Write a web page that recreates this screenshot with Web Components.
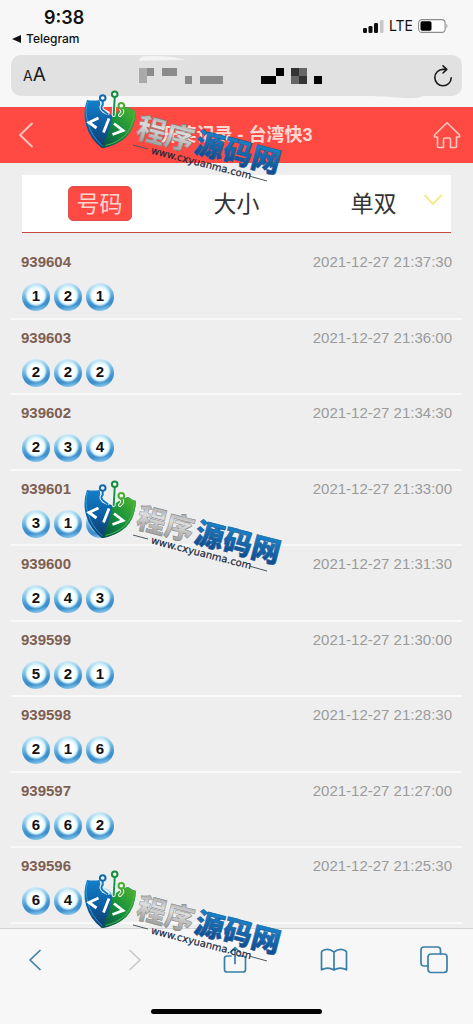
<!DOCTYPE html>
<html lang="zh-CN">
<head>
<meta charset="utf-8">
<meta name="viewport" content="width=device-width, initial-scale=1">
<title>开奖记录 - 台湾快3</title>
<style>
    body {
        margin: 0;
        font-family: "Liberation Sans", "Noto Sans CJK SC", sans-serif;
        background: #f7f7f7;
    }
</style>
</head>
<body>
<lottery-app>
    <status-bar slot="top" time="9:38" back="Telegram" network="LTE"></status-bar>
    <address-bar slot="top"></address-bar>
    <page-header slot="top">开奖记录 - 台湾快3</page-header>
    <view-tabs slot="top">
        <view-tab active>号码</view-tab>
        <view-tab>大小</view-tab>
        <view-tab>单双</view-tab>
    </view-tabs>
    <draw-row issue="939604" time="2021-12-27 21:37:30" balls="1,2,1"></draw-row>
    <draw-row issue="939603" time="2021-12-27 21:36:00" balls="2,2,2"></draw-row>
    <draw-row issue="939602" time="2021-12-27 21:34:30" balls="2,3,4"></draw-row>
    <draw-row issue="939601" time="2021-12-27 21:33:00" balls="3,1,2"></draw-row>
    <draw-row issue="939600" time="2021-12-27 21:31:30" balls="2,4,3"></draw-row>
    <draw-row issue="939599" time="2021-12-27 21:30:00" balls="5,2,1"></draw-row>
    <draw-row issue="939598" time="2021-12-27 21:28:30" balls="2,1,6"></draw-row>
    <draw-row issue="939597" time="2021-12-27 21:27:00" balls="6,6,2"></draw-row>
    <draw-row issue="939596" time="2021-12-27 21:25:30" balls="6,4,1"></draw-row>
    <browser-toolbar slot="bottom"></browser-toolbar>
    <site-watermark slot="overlay" style="--top: 88px"></site-watermark>
    <site-watermark slot="overlay" style="--top: 478px"></site-watermark>
    <site-watermark slot="overlay" style="--top: 868px"></site-watermark>
</lottery-app>

<script>
// Page shell: bars on top, the draw list in the middle, the browser toolbar below
class LotteryApp extends HTMLElement {
    constructor() {
        super();
        this._root = this.attachShadow({ mode: 'open' });
    }
    connectedCallback() {
        this._root.innerHTML = `
        <style>
            :host {
                display: flex;
                flex-direction: column;
                position: relative;
                min-height: 100vh;
                overflow: hidden;
                background: #eeeeee;
            }
            main {
                flex: 1;
                display: grid;
                grid-auto-rows: 1fr;
                padding: 11px 11px 4px;
            }
        </style>
        <slot name="top"></slot>
        <main><slot></slot></main>
        <slot name="bottom"></slot>
        <slot name="overlay"></slot>
    `;
    }
}
window.customElements.define('lottery-app', LotteryApp)

class StatusBar extends HTMLElement {
    constructor() {
        super();
        this._root = this.attachShadow({ mode: 'open' });
    }
    connectedCallback() {
        this._root.innerHTML = `
        <style>
            :host {
                display: flex;
                justify-content: space-between;
                align-items: flex-start;
                box-sizing: border-box;
                height: 55px;
                padding: 6px 25px 0 12px;
                background: #f7f7f7;
                color: #111;
                font-family: Inter, sans-serif;
            }
            .left, .right { display: flex; }
            .left { flex-direction: column; }
            .right { align-items: center; gap: 5px; padding-top: 9px; font-size: 14px; line-height: 22px; }
            time { padding-left: 32px; font-size: 18px; line-height: 24px; font-weight: 600; }
            a { display: flex; align-items: center; gap: 5px; font-size: 12px; line-height: 18px; font-weight: 500; color: inherit; text-decoration: none; }
            svg { display: block; }
        </style>
        <div class="left">
            <time>${this.getAttribute('time')}</time>
            <a href="#"><svg width="9" height="8" viewBox="0 0 9 8"><path d="M0 4 9 0V8Z" fill="#111"/></svg>${this.getAttribute('back')}</a>
        </div>
        <div class="right">
            <svg width="21" height="13" viewBox="0 0 21 13">
                <rect x="0" y="8" width="4" height="5" rx="1.2" fill="#111"/>
                <rect x="5.5" y="6" width="4" height="7" rx="1.2" fill="#111"/>
                <rect x="11" y="3" width="4" height="10" rx="1.2" fill="#111"/>
                <rect x="17" y="0" width="3.5" height="13" rx="1.2" fill="#c9c9c9"/>
            </svg>
            <span>${this.getAttribute('network')}</span>
            <svg width="30" height="14" viewBox="0 0 30 14">
                <rect x=".6" y=".6" width="26.500" height="12.8" rx="3.5" fill="#fff" stroke="#8c8c8c" stroke-width="1.1"/>
                <rect x="2.5" y="2.3" width="11" height="9.4" rx="1.6" fill="#000"/>
                <path d="M28.500 4.6q1.8 2.4 0 4.8Z" fill="#8c8c8c"/>
            </svg>
        </div>
    `;
    }
}
window.customElements.define('status-bar', StatusBar)

class AddressBar extends HTMLElement {
    constructor() {
        super();
        this._root = this.attachShadow({ mode: 'open' });
    }
    connectedCallback() {
        this._root.innerHTML = `
        <style>
            :host { display: block; padding: 0 11px 11px; background: #f7f7f7; }
            .bar {
                display: grid;
                grid-template-columns: 1fr 184px 1fr;
                align-items: center;
                height: 41px;
                padding: 0 8px 0 12px;
                border-radius: 10px;
                background: #e1e1e1;
            }
            button { display: flex; align-items: baseline; padding: 0; border: 0; background: none; color: #1b1b1b; font: 19px/24px Inter, sans-serif; }
            button:last-child { justify-self: end; }
            small { font-size: 14px; }
            .address { display: block; overflow: visible; }
        </style>
        <div class="bar">
            <button aria-label="Text size"><small>A</small>A</button>
            <!-- masked host name -->
            <svg class="address" width="184" height="41" viewBox="0 0 184 41" shape-rendering="crispEdges">
                <path d="M-8 5q1-4 9-4 26 0 38 4-20 0-47 1Z" fill="#f3f3f3" shape-rendering="auto"/>
                <path d="M222 41h54q-6 3-20 2-20-2-34-2Z" fill="#e1e1e1" shape-rendering="auto"/>
                <path d="M-8 13H0v15H-8Z" fill="#a9a9a9"/>
                <path d="M0 13h7v8H0ZM15 13h15v8H15ZM38 21h7v8h-7ZM53 21h23v8H53Z" fill="#8b8b8b"/>
                <path d="M114 21h15v8h-15ZM129 13h8v8h-8ZM167 21h8v8h-8Z" fill="#000"/>
                <path d="M144 13h8v8h-8ZM152 21h8v8h-8Z" fill="#333"/>
                <path d="M152 13h8v8h-8ZM144 21h8v8h-8Z" fill="#666"/>
            </svg>
            <button aria-label="Reload">
                <svg width="22" height="24" viewBox="0 0 22 24" fill="none" stroke="#1b1b1b" stroke-width="1.6" stroke-linecap="round" stroke-linejoin="round">
                    <path d="M14.5 5.4H11a8.2 8.2 0 1 0 8.2 8.3M11 1.8l3.8 3.6L11 9"/>
                </svg>
            </button>
        </div>
    `;
    }
}
window.customElements.define('address-bar', AddressBar)

class PageHeader extends HTMLElement {
    constructor() {
        super();
        this._root = this.attachShadow({ mode: 'open' });
    }
    connectedCallback() {
        this._root.innerHTML = `
        <style>
            :host {
                display: grid;
                grid-template-columns: 44px 1fr 44px;
                align-items: center;
                height: 56px;
                padding: 0 4px;
                background: #ff4a43;
                color: #fbd9d3;
            }
            h1 { margin: 0; font-size: 18px; line-height: 28px; font-weight: bold; text-align: center; }
            a { display: flex; justify-content: center; }
        </style>
        <a href="#" aria-label="Back">
            <svg width="16" height="26" viewBox="0 0 16 26" fill="none" stroke="#fbc9c0" stroke-width="1.8"><path d="M14.5 1 2 13l12.5 12"/></svg>
        </a>
        <h1><slot></slot></h1>
        <a href="#" aria-label="Home">
            <svg width="28" height="28" viewBox="0 0 28 28" fill="none" stroke="#fbc9c0" stroke-width="1.6" stroke-linejoin="round"><path d="M1.5 14 14 1.8 26.5 14v2h-3v9.5q0 1-1 1h-5v-8q0-1.5-1.500-1.500h-4q-1.500 0-1.500 1.500v8h-5q-1 0-1-1V16h-3Z"/></svg>
        </a>
    `;
    }
}
window.customElements.define('page-header', PageHeader)

class ViewTabs extends HTMLElement {
    constructor() {
        super();
        this._root = this.attachShadow({ mode: 'open' });
    }
    connectedCallback() {
        this._root.innerHTML = `
        <style>
            :host {
                display: block;
                position: relative;
                margin: 12px 22px 0;
                border-bottom: 1px solid #c4483f;
                background: #fff;
            }
            nav { display: grid; grid-template-columns: repeat(3, 1fr); align-items: center; height: 57px; padding: 0 9px; }
            /* the chevron lies over the last tab's cell */
            .more { position: absolute; right: 8px; top: 18px; padding: 0; border: 0; background: none; }
            svg { display: block; }
        </style>
        <nav><slot></slot></nav>
        <button class="more" aria-label="More">
            <svg width="20" height="14" viewBox="0 0 20 14" fill="none" stroke="#f6ea93" stroke-width="2"><path d="m1.500 2 8.500 9 8.500-9"/></svg>
        </button>
    `;
    }
}
window.customElements.define('view-tabs', ViewTabs)

class ViewTab extends HTMLElement {
    constructor() {
        super();
        this._root = this.attachShadow({ mode: 'open' });
    }
    connectedCallback() {
        this._root.innerHTML = `
        <style>
            :host { display: flex; justify-content: center; }
            button {
                padding: 0 8px 2px;
                border: 1px solid transparent;
                border-radius: 5px;
                background: none;
                color: #333;
                font: 23px/31px "Noto Sans CJK SC", sans-serif;
            }
            :host([active]) button { border-color: #d9544e; background: #ff4a43; color: #fbd5d0; }
        </style>
        <button><slot></slot></button>
    `;
    }
}
window.customElements.define('view-tab', ViewTab)

// One draw: issue number, time and its three balls
class DrawRow extends HTMLElement {
    constructor() {
        super();
        this._root = this.attachShadow({ mode: 'open' });
    }
    connectedCallback() {
        const balls = this.getAttribute('balls').split(',').map(n => `<span>${n}</span>`).join('');
        this._root.innerHTML = `
        <style>
            :host { display: block; padding: 8px 10px 0; border-bottom: 2px solid #f9f9f9; }
            .info { display: flex; justify-content: space-between; font-size: 15px; line-height: 19px; }
            b { color: #7d6052; }
            time { color: #9b9b9b; }
            .balls { display: flex; gap: 4px; padding: 12px 1px 0; }
            .balls span {
                width: 28px;
                height: 28px;
                border-radius: 50%;
                background:
                    radial-gradient(circle at 50% 45%, #fff 0 30%, #dff8fc 42%, transparent 54%),
                    linear-gradient(170deg, #d3ebf6 6%, #8fcbea 30%, #3f93cf 62%, #3c8dcb 76%, #8ccdee 94%);
                color: #111;
                font-size: 15px;
                font-weight: bold;
                line-height: 26px;
                text-align: center;
            }
        </style>
        <div class="info"><b>${this.getAttribute('issue')}</b><time>${this.getAttribute('time')}</time></div>
        <div class="balls">${balls}</div>
    `;
    }
}
window.customElements.define('draw-row', DrawRow)

class BrowserToolbar extends HTMLElement {
    constructor() {
        super();
        this._root = this.attachShadow({ mode: 'open' });
    }
    connectedCallback() {
        this._root.innerHTML = `
        <style>
            :host { display: block; border-top: 1px solid #d4d4d4; background: #f7f7f7; }
            nav { display: flex; justify-content: space-between; padding: 9px 17px 0 13px; }
            button { display: flex; align-items: center; justify-content: center; width: 44px; height: 44px; padding: 0; border: 0; background: none; }
            svg { fill: none; stroke: #3a7fa8; stroke-width: 1.7; stroke-linecap: round; stroke-linejoin: round; }
            .off { stroke: #c8c8c8; }
            .home { width: 36%; height: 5px; margin: 27px auto 10px; border-radius: 3px; background: #000; }
        </style>
        <nav>
            <button aria-label="Back"><svg width="14" height="22" viewBox="0 0 14 22"><path d="M12 1.500 2 11l10 9.500"/></svg></button>
            <button aria-label="Forward" disabled><svg class="off" width="14" height="22" viewBox="0 0 14 22"><path d="m2 1.500 10 9.500L2 20.500"/></svg></button>
            <button aria-label="Share"><svg width="24" height="28" viewBox="0 0 24 28"><path d="M8 10H4q-2.500 0-2.500 2.500v11Q1.500 26 4 26h16q2.500 0 2.500-2.500v-11Q22.500 10 20 10h-4M12 17.500V1.500M7.500 6 12 1.500 16.500 6"/></svg></button>
            <button aria-label="Bookmarks"><svg width="28" height="24" viewBox="0 0 28 24"><path d="M14 4Q8-.5 2.500 2.800q-1 .7-1 1.700v17.300Q8 18.500 14 22q6-3.500 12.500-.2V4.500q0-1-1-1.700Q20-.5 14 4Zm0 0v18"/></svg></button>
            <button aria-label="Tabs"><svg width="28" height="28" viewBox="0 0 28 28"><rect x="8" y="8" width="19" height="18.500" rx="3"/><path d="M8 20H4q-3 0-3-3V4q0-3 3-3h13.500q3 0 3 3v4"/></svg></button>
        </nav>
        <div class="home"></div>
    `;
    }
}
window.customElements.define('browser-toolbar', BrowserToolbar)

// Shield logo with the slanted site name, laid over the page
class SiteWatermark extends HTMLElement {
    constructor() {
        super();
        this._root = this.attachShadow({ mode: 'open' });
    }
    connectedCallback() {
        this._root.innerHTML = `
        <style>
            :host { display: block; position: absolute; left: 80px; top: var(--top); pointer-events: none; }
            svg { display: block; }
            .name { font: 900 29px "Noto Sans CJK SC", sans-serif; }
            .url { font: 10px "DejaVu Sans", sans-serif; fill: #18263a; stroke: #18263a; stroke-width: .2; }
        </style>
        <svg width="212" height="104" viewBox="0 0 212 104" fill="none">
            <defs>
                <linearGradient id="blue" x1="0" y1="0" x2="0" y2="1"><stop stop-color="#1380ca"/><stop offset=".5" stop-color="#0d5fa3"/><stop offset="1" stop-color="#103c6c"/></linearGradient>
                <linearGradient id="green" x1="1" y1="0" x2="0" y2="1"><stop stop-color="#55b52f"/><stop offset=".5" stop-color="#16913c"/><stop offset="1" stop-color="#064c49"/></linearGradient>
                <linearGradient id="silver" x1="0" y1="0" x2="0" y2="1"><stop stop-color="#7c7c7c"/><stop offset=".45" stop-color="#dedede"/><stop offset="1" stop-color="#8a8a8a"/></linearGradient>
                <linearGradient id="ink" x1="0" y1="0" x2="0" y2="1"><stop offset=".1" stop-color="#1c8ed4"/><stop offset="1" stop-color="#103f80"/></linearGradient>
            </defs>
            <path d="M7 12q6 1 12.500 0L22 24l13 4 7-7 6-2q4 3 8 4-1 17-10 26-10 9-24.300 11Q10 51 6 37 2.500 24 7 12Z" fill="url(#blue)"/>
            <path d="m33 27 9-6 6-2q4 3 8 4-1 17-10 26-10 9-24.300 11Q29 45 33 27Z" fill="url(#green)"/>
            <path d="M7.500 14q-3 10 .5 21 3 13 14.500 23" stroke="#2a9bd8" stroke-width="1"/>
            <path d="M54.500 24q-1.500 15-10 24-8 7-19 9.500" stroke="#4bb84a" stroke-width="1"/>
            <g stroke="#eef7f7" stroke-width="4" stroke-linecap="round">
                <path d="M22.700 13v4q-3 3 1 6l4 2M34.700 10l-1 17M41 21q3 3-1 6"/>
            </g>
            <g stroke-width="2" stroke-linecap="round" fill="#f5f7f7">
                <path d="M22.700 13v4q-3 3 1 6l4 3" stroke="#1478b9" fill="none"/>
                <path d="m34.700 10-1 17" stroke="#159648" fill="none"/>
                <path d="M41 21q3 3-1 6" stroke="#43a82e" fill="none"/>
                <circle cx="22.700" cy="10" r="2.800" stroke="#1668ad"/>
                <circle cx="34.700" cy="6.300" r="2.800" stroke="#168e3e"/>
                <circle cx="41.300" cy="17.700" r="2.800" stroke="#4bad32"/>
            </g>
            <path d="m18.500 30-9.500 4.500 7.500 5.500M29 30.500l-5.500 14M34 35.500l9 7-10.500 4" stroke="#fff" stroke-width="2.800"/>
            <g transform="translate(55 49) rotate(14.500)">
                <g class="name">
                    <text x="0" y="0" fill="url(#silver)" stroke="#777" stroke-width=".4">程序</text>
                    <text x="60" y="0" fill="url(#ink)" stroke="#175b9c" stroke-width=".6">源码网</text>
                </g>
                <text class="url" x="19" y="12">www.cxyuanma.com</text>
            </g>
            <path d="m53 57 15 4M169 88l18 5" stroke="#4b5660" stroke-width="1"/>
        </svg>
    `;
    }
}
window.customElements.define('site-watermark', SiteWatermark)
</script>
</body>
</html>
